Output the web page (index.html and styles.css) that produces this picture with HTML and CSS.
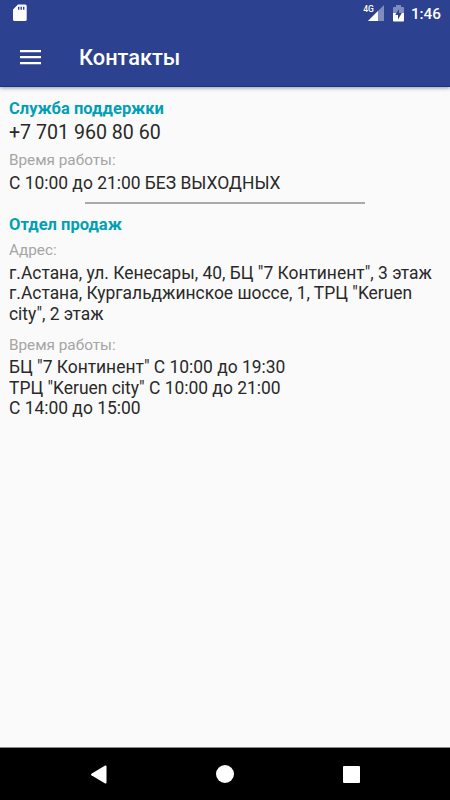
FILE: index.html
```html
<!DOCTYPE html>
<html lang="ru">
<head>
<meta charset="utf-8">
<title>Контакты</title>
<link rel="stylesheet" href="styles.css">
</head>
<body>
<header class="top">
  <div class="status">
    <svg class="sd" width="14" height="18" viewBox="0 0 14 18"><path fill="#fff" fill-rule="evenodd" d="M5 .5h7.200q1.500 0 1.500 1.500v13.500q0 1.500-1.500 1.500H1.500Q0 17 0 15.500V5.500zM5 2.700v3h1.400v-3zm2.500 0v3h1.400v-3zm2.500 0v3h1.400v-3z"/></svg>
    <div class="signal"><span class="net">4G</span>
      <svg width="16" height="16" viewBox="0 0 16 16"><path fill="#fff" fill-opacity=".4" d="M16 0v16H0z"/><path fill="#fff" d="M10 6v10H0z"/></svg>
    </div>
    <svg class="battery" width="11" height="17" viewBox="0 0 11 17"><path fill="#fff" fill-opacity=".4" d="M3 0h5v2h2.200q.8 0 .8.800V8H0V2.800Q0 2 .8 2H3z"/><path fill="#fff" d="M0 8h11v7.600q0 .9-.8.900H.8q-.8 0-.8-.9z"/><path fill="#2c4190" d="M6 4 2.200 10H5v4.500L8.800 8H6z"/></svg>
    <span class="clock">1:46</span>
  </div>
  <div class="appbar">
    <svg class="menu" width="21" height="16" viewBox="0 0 21 16"><path fill="#fff" d="M0 1h21v2.200H0zm0 6h21v2.200H0zm0 6h21v2.200H0z"/></svg>
    <h1>Контакты</h1>
  </div>
</header>
<main>
  <section class="support">
    <h2>Служба поддержки</h2>
    <p class="phone">+7 701 960 80 60</p>
    <p class="label">Время работы:</p>
    <p class="text schedule">С 10:00 до 21:00 БЕЗ ВЫХОДНЫХ</p>
  </section>
  <hr>
  <section class="sales">
    <h2>Отдел продаж</h2>
    <p class="label address">Адрес:</p>
    <p class="text schedule">г.Астана, ул. Кенесары, 40, БЦ "7 Континент", 3 этаж<br>г.Астана, Кургальджинское шоссе, 1, ТРЦ "Keruen city", 2 этаж</p>
    <p class="label hours">Время работы:</p>
    <p class="text">БЦ "7 Континент" С 10:00 до 19:30<br>ТРЦ "Keruen city" С 10:00 до 21:00<br>С 14:00 до 15:00</p>
  </section>
</main>
<nav>
  <svg width="16" height="19" viewBox="0 0 16 19"><path fill="#fff" d="M.4 8.700 14.200.6q1.300-.5 1.300.8v16.200q0 1.300-1.300.8L.4 10.300q-.7-.8 0-1.600z"/></svg>
  <span class="home"></span>
  <span class="recent"></span>
</nav>
</body>
</html>
```

FILE: styles.css
```css
* { box-sizing: border-box; margin: 0; padding: 0; }
body {
  width: 450px;
  height: 800px;
  display: flex;
  flex-direction: column;
  overflow: hidden;
  background: #fafafa;
  color: #292929;
  font-family: Roboto, sans-serif;
}
svg { display: block; flex: none; }
.top {
  height: 87px;
  flex: none;
  background: #2c4190;
  border-bottom: 1px solid #153490;
  box-shadow: 0 1px 4px rgba(0, 0, 0, .4);
  color: #fff;
}
.status {
  height: 27px;
  padding: 0 9px 0 13px;
  display: flex;
  align-items: flex-start;
}
.sd { margin-top: 4px; }
.signal {
  display: flex;
  margin: 5px 9px 0 auto;
}
.net {
  font-size: 8.5px;
  line-height: 9px;
  font-weight: 500;
  margin-right: -6px;
}
.battery { margin: 5px 7px 0 0; }
.clock { font-size: 15.3px; line-height: 28px; font-weight: 500; }
.appbar {
  height: 59px;
  padding-left: 20px;
  display: flex;
  align-items: center;
}
h1 { margin-left: 38px; font-size: 21.8px; line-height: 26px; font-weight: 500; padding-top: 3px; }
main { flex: 1; padding: 11px 9px 0; }
h2 { font-size: 16.5px; line-height: 21px; font-weight: 700; color: #00a0b4; }
.phone { font-size: 19.6px; line-height: 23px; margin-top: 2px; }
.label { font-size: 15.3px; line-height: 18px; color: #a5a5a5; margin-top: 7px; }
.text { font-size: 17.43px; line-height: 20.7px; margin-top: 3px; }
.schedule { margin-top: 4px; }
hr { width: 280px; height: 2px; margin: 8px auto 0; border: 0; background: #a9a9a9; }
.sales { padding-top: 10px; }
.address { margin-top: 6px; }
.hours { margin-top: 11px; }
nav {
  height: 53px;
  flex: none;
  display: flex;
  align-items: center;
  gap: 109px;
  padding-left: 91px;
  background: #000;
  border-top: 1px solid #888;
}
.home { width: 18px; height: 18px; border-radius: 50%; background: #fff; }
.recent { width: 17px; height: 17px; border-radius: 1px; background: #fff; }
```
